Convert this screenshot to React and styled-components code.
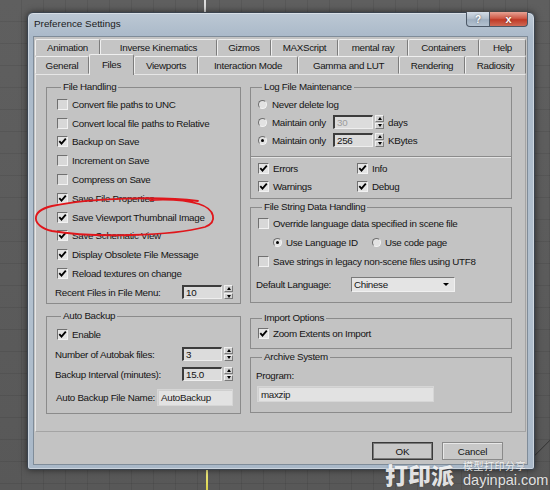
import React from 'react'
import styled, { createGlobalStyle } from 'styled-components'

const GlobalStyle = createGlobalStyle`
  html, body { margin:0; padding:0; }
  body {
    width:550px; height:490px; overflow:hidden;
    background:#5c5c5c;
    font-family:"Liberation Sans", Arial, sans-serif;
  }
`

const topTabs = [
  { title: 'Animation', w: 65 },
  { title: 'Inverse Kinematics', w: 117 },
  { title: 'Gizmos', w: 54 },
  { title: 'MAXScript', w: 67 },
  { title: 'mental ray', w: 70 },
  { title: 'Containers', w: 71 },
  { title: 'Help', w: 47 },
]

const frontTabs = [
  { title: 'General', w: 54 },
  { title: 'Files', w: 45, active: true },
  { title: 'Viewports', w: 64 },
  { title: 'Interaction Mode', w: 100 },
  { title: 'Gamma and LUT', w: 101 },
  { title: 'Rendering', w: 66 },
  { title: 'Radiosity', w: 61 },
]

const fileHandling = [
  { label: 'Convert file paths to UNC', on: false },
  { label: 'Convert local file paths to Relative', on: false },
  { label: 'Backup on Save', on: true },
  { label: 'Increment on Save', on: false },
  { label: 'Compress on Save', on: false },
  { label: 'Save File Properties', on: true },
  { label: 'Save Viewport Thumbnail Image', on: true },
  { label: 'Save Schematic View', on: true },
  { label: 'Display Obsolete File Message', on: true },
  { label: 'Reload textures on change', on: true },
]

const Page = styled.div`
  position:relative;
  width:550px;
  height:490px;
  box-sizing:border-box;
  padding:12px 0 0 27px;
  overflow:hidden;
  background:
    linear-gradient(#dcdcdc, #dcdcdc) 204px 0 / 2px 14px no-repeat,
    linear-gradient(#f4f08a, #d9d24a) 206px 468px / 2px 22px no-repeat,
    linear-gradient(135deg, transparent 49%, #3c3c3c 50%, transparent 52%) 520px 430px / 40px 40px no-repeat,
    repeating-linear-gradient(to right, transparent 0 21px, rgba(0,0,0,.08) 21px 22px),
    repeating-linear-gradient(to bottom, transparent 0 21px, rgba(0,0,0,.08) 21px 22px),
    linear-gradient(#5f5f5f, #585858);
`

const Window = styled.div`
  width:508px;
  height:458px;
  box-sizing:border-box;
  border:1px solid #3a434e;
  border-radius:6px 6px 3px 3px;
  background:linear-gradient(to bottom, #bcc8d4, #aab9c9 24px, #b3c1cf 60%, #a9b8c8);
  box-shadow:0 0 7px rgba(0,0,0,.55), inset 0 0 0 1px rgba(255,255,255,.4);
  padding:0 6px 4px 5px;
  display:flex;
  flex-direction:column;
`

const TitleBar = styled.div`
  height:23px;
  display:flex;
  justify-content:space-between;
  align-items:flex-start;
`

const Title = styled.div`
  padding:5px 0 0 1px;
  font-size:9.9px;
  line-height:12px;
  color:#1a1a1a;
`

const Caps = styled.div`
  display:flex;
  margin-top:-1px;
`

const CapBtn = styled.div`
  width:${p => p.$w}px;
  height:15px;
  box-sizing:border-box;
  display:flex;
  align-items:center;
  justify-content:center;
  border:1px solid #4c5866;
  border-top:none;
  border-left:${p => p.$red ? 'none' : '1px solid #4c5866'};
  border-radius:${p => p.$red ? '0 0 4px 0' : '0 0 0 4px'};
  background:${p => p.$red
    ? 'linear-gradient(#e6a294, #cf5a47 45%, #bf3a27 55%, #d06a55)'
    : 'linear-gradient(#d3dce6, #b2bfcc 45%, #9fafbf 55%, #b4c2d0)'};
  color:#fff;
  font-weight:bold;
  font-size:${p => p.$red ? 11 : 10}px;
  text-shadow:0 0 2px rgba(0,0,0,.6);
`

const Client = styled.div`
  flex:1;
  background:#c3c3c3;
  border:1px solid #7f8c99;
  padding:2px 0 0 1px;
  display:flex;
  flex-direction:column;
`

const TabRow = styled.div`
  display:flex;
  height:${p => p.$h}px;
  position:relative;
  z-index:${p => p.$front ? 2 : 1};
`

const Tab = styled.div`
  width:${p => p.$w}px;
  box-sizing:border-box;
  display:flex;
  align-items:center;
  justify-content:center;
  background:#c5c5c5;
  border:1px solid;
  border-color:#efefef #7c7c7c transparent #efefef;
  border-radius:2px 2px 0 0;
  font-size:9.8px;
  letter-spacing:-0.3px;
  color:#161616;
  white-space:nowrap;
  ${p => p.$active && `
    background:#c3c3c3;
    margin-top:-2px;
    height:calc(100% + 3px);
    border-bottom:none;
    padding-bottom:2px;
  `}
`

const TabPage = styled.div`
  width:491px;
  height:358px;
  box-sizing:border-box;
  border:1px solid;
  border-color:#e6e6e6 #a4a4a4 #a4a4a4 #e6e6e6;
  padding:6px 0 0 10px;
  display:grid;
  grid-template-columns:195px 262px;
  column-gap:9px;
  align-items:start;
`

const Column = styled.div`
  display:flex;
  flex-direction:column;
`

const Group = styled.fieldset`
  margin:${p => p.$mt || 0}px 0 0;
  padding:${p => p.$pad};
  height:${p => p.$h}px;
  box-sizing:border-box;
  min-width:0;
  border:1px solid #8b8b8b;
`

const Legend = styled.legend`
  font-size:9.8px;
  letter-spacing:-0.3px;
  line-height:12px;
  padding:0 2px;
  margin-left:4px;
  color:#151515;
`

const Row = styled.div`
  display:flex;
  align-items:center;
  height:${p => p.$h || 18.8}px;
  margin-top:${p => p.$mt || 0}px;
  padding-left:${p => p.$indent || 0}px;
  font-size:9.8px;
  letter-spacing:-0.3px;
  color:#141414;
  white-space:nowrap;
`

const Label = styled.span`
  width:${p => p.$w ? p.$w + 'px' : 'auto'};
  margin-left:${p => p.$ml ?? 0}px;
  flex:none;
`

const Spacer = styled.span`
  flex:1;
`

const TwoCol = styled.div`
  display:grid;
  grid-template-columns:${p => p.$first}px 1fr;
`

const Box = styled.span`
  width:11px;
  height:11px;
  box-sizing:border-box;
  flex:none;
  margin-right:4px;
  display:inline-flex;
  align-items:center;
  justify-content:center;
  border:1px solid;
  border-color:#707070 #f2f2f2 #f2f2f2 #707070;
  background:${p => p.$on ? '#e4e4e4' : '#d8d8d8'};
`

const Dot = styled.span`
  width:9px;
  height:9px;
  box-sizing:border-box;
  flex:none;
  margin-right:${p => p.$mr ?? 5}px;
  border-radius:50%;
  border:1px solid;
  border-color:#6f6f6f #f2f2f2 #f2f2f2 #6f6f6f;
  background:#e2e2e2;
  display:inline-flex;
  align-items:center;
  justify-content:center;
  &::after{
    content:'';
    width:3px;
    height:3px;
    border-radius:50%;
    background:${p => p.$on ? '#000' : 'transparent'};
  }
`

const Sep = styled.div`
  height:1px;
  margin:7px -6px 1px -7px;
  background:#8b8b8b;
  border-bottom:1px solid #e4e4e4;
`

const Spin = styled.span`
  display:flex;
  align-items:center;
  flex:none;
`

const SpinField = styled.span`
  width:40px;
  height:14px;
  box-sizing:border-box;
  border-style:solid;
  border-width:2px 1px 1px 2px;
  border-color:#3c3c3c #eeeeee #eeeeee #3c3c3c;
  background:#dcdcdc;
  color:${p => p.$disabled ? '#9d9d9d' : '#111'};
  padding-left:2px;
  line-height:11px;
  font-size:9.8px;
`

const Arrows = styled.span`
  display:flex;
  flex-direction:column;
  gap:1px;
  width:9px;
  height:14px;
  margin-left:2px;
`

const Arrow = styled.span`
  flex:1;
  box-sizing:border-box;
  background:#d2d2d2;
  border:1px solid;
  border-color:#f0f0f0 #7a7a7a #7a7a7a #f0f0f0;
  display:flex;
  align-items:center;
  justify-content:center;
  &::after{
    content:'';
    border-left:2px solid transparent;
    border-right:2px solid transparent;
    ${p => p.$down ? 'border-top:3px solid #000;' : 'border-bottom:3px solid #000;'}
  }
`

const TextField = styled.span`
  width:${p => p.$w}px;
  height:${p => p.$h}px;
  box-sizing:border-box;
  flex:none;
  display:flex;
  align-items:center;
  padding-left:3px;
  margin-left:${p => p.$ml ?? 0}px;
  background:#e2e2e2;
  border:1px solid #d6d6d6;
  box-shadow:inset 1px 1px 0 #cfcfcf;
  color:#1a1a1a;
`

const Select = styled.span`
  width:104px;
  height:15px;
  box-sizing:border-box;
  flex:none;
  display:flex;
  align-items:center;
  justify-content:space-between;
  padding:0 5px 0 2px;
  background:#e4e4e4;
  border:1px solid;
  border-color:#7a7a7a #f0f0f0 #f0f0f0 #7a7a7a;
  &::after{
    content:'';
    border-left:3px solid transparent;
    border-right:3px solid transparent;
    border-top:3px solid #000;
  }
`

const Buttons = styled.div`
  display:flex;
  justify-content:flex-end;
  gap:9px;
  margin-top:10px;
  padding-right:24px;
`

const Button = styled.div`
  width:61px;
  height:18px;
  box-sizing:border-box;
  display:flex;
  align-items:center;
  justify-content:center;
  background:#c8c8c8;
  border:1px solid ${p => p.$default ? '#3a3a3a' : '#8a8a8a'};
  box-shadow:${p => p.$default ? 'inset 0 0 0 1px #7a7a7a' : 'inset 1px 1px 0 #e8e8e8'};
  font-size:9.8px;
  letter-spacing:-0.2px;
  color:#111;
`

const Annotation = styled.svg`
  position:absolute;
  left:0;
  top:0;
  pointer-events:none;
`

const Watermark = styled.div`
  position:absolute;
  left:385px;
  top:460px;
  width:165px;
  display:flex;
  align-items:flex-start;
  gap:9px;
  white-space:nowrap;
  color:rgba(255,255,255,.85);
  pointer-events:none;
  text-shadow:0 0 2px rgba(0,0,0,.25);
`

const MarkBig = styled.div`
  flex:none;
  height:28px;
  font-family:"Noto Sans CJK SC", sans-serif;
  font-weight:900;
  font-size:23px;
  line-height:28px;
  letter-spacing:0;
`

const MarkSide = styled.div`
  flex:none;
  display:flex;
  flex-direction:column;
  gap:1px;
`

const MarkSmall = styled.div`
  height:12px;
  font-family:"Noto Sans CJK SC", sans-serif;
  font-size:10px;
  line-height:12px;
  letter-spacing:0.5px;
`

const MarkUrl = styled.div`
  height:15px;
  font-family:"Liberation Sans", Arial, sans-serif;
  font-size:14.5px;
  line-height:15px;
`

const Tick = () => (
  <svg width="9" height="9" viewBox="0 0 9 9">
    <path d="M1.3 4.1 L3.5 6.7 L7.8 1.6" fill="none" stroke="#000" strokeWidth="1.8" />
  </svg>
)

function Check({ on, label, indent }) {
  return (
    <Row $indent={indent}>
      <Box $on={on}>{on && <Tick />}</Box>
      <span>{label}</span>
    </Row>
  )
}

function Spinner({ value, disabled }) {
  return (
    <Spin>
      <SpinField $disabled={disabled}>{value}</SpinField>
      <Arrows>
        <Arrow />
        <Arrow $down />
      </Arrows>
    </Spin>
  )
}

export default function App() {
  return (
    <Page>
      <GlobalStyle />
      <Window>
        <TitleBar>
          <Title>Preference Settings</Title>
          <Caps>
            <CapBtn $w={24}>?</CapBtn>
            <CapBtn $w={38} $red>x</CapBtn>
          </Caps>
        </TitleBar>
        <Client>
          <TabRow $h={17}>
            {topTabs.map(({ title, w }) => (
              <Tab key={title} $w={w}>{title}</Tab>
            ))}
          </TabRow>
          <TabRow $h={18} $front>
            {frontTabs.map(({ title, w, active }) => (
              <Tab key={title} $w={w} $active={active}>{title}</Tab>
            ))}
          </TabRow>
          <TabPage>
            <Column>
              <Group $h={223} $pad="2px 7px 0 10px">
                <Legend>File Handling</Legend>
                {fileHandling.map(({ label, on }) => (
                  <Check key={label} label={label} on={on} />
                ))}
                <Row>
                  <Label $ml={-2}>Recent Files in File Menu:</Label>
                  <Spacer />
                  <Spinner value="10" />
                </Row>
              </Group>
              <Group $h={104} $mt={6} $pad="2px 7px 0 10px">
                <Legend>Auto Backup</Legend>
                <Row $h={20}><Box $on><Tick /></Box><span>Enable</span></Row>
                <Row $h={20}>
                  <Label $ml={-2}>Number of Autobak files:</Label>
                  <Spacer />
                  <Spinner value="3" />
                </Row>
                <Row $h={20}>
                  <Label $ml={-2}>Backup Interval (minutes):</Label>
                  <Spacer />
                  <Spinner value="15.0" />
                </Row>
                <Row $h={22} $mt={2}>
                  <Label $ml={-1}>Auto Backup File Name:</Label>
                  <Spacer />
                  <TextField $w={76} $h={17}>AutoBackup</TextField>
                </Row>
              </Group>
            </Column>

            <Column>
              <Group $h={118} $pad="2px 6px 0 7px">
                <Legend>Log File Maintenance</Legend>
                <Row $h={18}><Dot /><span>Never delete log</span></Row>
                <Row $h={18}>
                  <Dot />
                  <Label $w={61}>Maintain only</Label>
                  <Spinner value="30" disabled />
                  <Label $ml={4}>days</Label>
                </Row>
                <Row $h={18}>
                  <Dot $on />
                  <Label $w={61}>Maintain only</Label>
                  <Spinner value="256" />
                  <Label $ml={4}>KBytes</Label>
                </Row>
                <Sep />
                <TwoCol $first={99}>
                  <Row $h={18}><Box $on><Tick /></Box><span>Errors</span></Row>
                  <Row $h={18}><Box $on><Tick /></Box><span>Info</span></Row>
                  <Row $h={18}><Box $on><Tick /></Box><span>Warnings</span></Row>
                  <Row $h={18}><Box $on><Tick /></Box><span>Debug</span></Row>
                </TwoCol>
              </Group>

              <Group $h={102} $mt={2} $pad="1.5px 6px 0 7px">
                <Legend>File String Data Handling</Legend>
                <Check label="Override language data specified in scene file" on={false} />
                <TwoCol $first={114}>
                  <Row $h={19} $indent={15}><Dot $on $mr={4} /><span>Use Language ID</span></Row>
                  <Row $h={19}><Dot $mr={4} /><span>Use code page</span></Row>
                </TwoCol>
                <Row $h={19}>
                  <Box /><span>Save strings in legacy non-scene files using UTF8</span>
                </Row>
                <Row $h={26}>
                  <Label $w={95} $ml={-2}>Default Language:</Label>
                  <Select>Chinese</Select>
                </Row>
              </Group>

              <Group $h={37} $mt={9} $pad="0 6px 0 7px">
                <Legend>Import Options</Legend>
                <Row $h={19}><Box $on><Tick /></Box><span>Zoom Extents on Import</span></Row>
              </Group>

              <Group $h={62} $mt={2} $pad="3px 6px 0 7px">
                <Legend>Archive System</Legend>
                <Row $h={19}><Label $ml={-2}>Program:</Label></Row>
                <Row $h={16} $mt={1}>
                  <TextField $w={177} $h={16} $ml={-1}>maxzip</TextField>
                </Row>
              </Group>
            </Column>
          </TabPage>
          <Buttons>
            <Button $default>OK</Button>
            <Button>Cancel</Button>
          </Buttons>
        </Client>
      </Window>

      <Annotation width="550" height="490" viewBox="0 0 550 490">
        <path
          d="M198 201 C160 196 90 198 52 206 C30 211 31 226 52 231 C92 238 172 236 205 227 C218 222 215 209 199 204 C186 200 170 199 150 200"
          fill="none"
          stroke="#e0161b"
          strokeWidth="1.8"
          strokeLinecap="round"
        />
      </Annotation>

      <Watermark>
        <MarkBig>打印派</MarkBig>
        <MarkSide>
          <MarkSmall>模型打印分享</MarkSmall>
          <MarkUrl>dayinpai.com</MarkUrl>
        </MarkSide>
      </Watermark>
    </Page>
  )
}
